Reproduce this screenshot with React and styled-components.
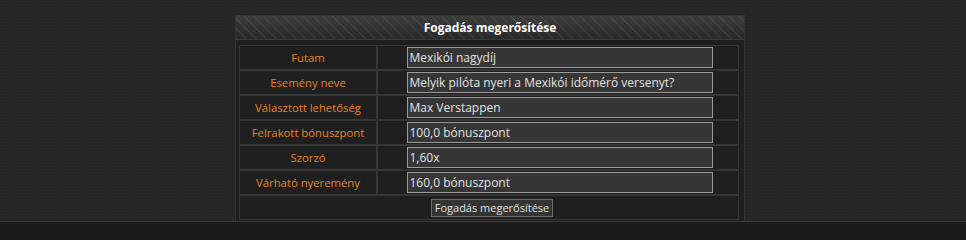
import React from "react";
import styled, { createGlobalStyle } from "styled-components";

const Global = createGlobalStyle`
  html, body { margin: 0; padding: 0; background: #1b1b1b; }
  body { font-family: "Open Sans", "Noto Sans", sans-serif; font-size: 12px; }
`;

const Page = styled.div`
  height: 222px;
  box-sizing: border-box;
  padding-top: 15px;
  background-color: #262626;
  background-image: radial-gradient(rgba(255,255,255,0.025) 1px, transparent 1px);
  background-size: 3px 3px;
  border-bottom: 1px solid #3a3a3a;
  display: flex;
  justify-content: center;
`;

const Footer = styled.div`
  height: 4px;
  background: #1c1c1c;
`;

const Panel = styled.div`
  width: 510px;
  margin-left: 14px;
  box-sizing: border-box;
  background: #1f1f1f;
  border: 1px solid #353535;
  border-bottom: none;
  display: flex;
  flex-direction: column;
`;

const Header = styled.div`
  height: 23px;
  display: flex;
  align-items: center;
  justify-content: center;
  color: #fff;
  font-weight: 700;
  font-size: 12px;
  border-bottom: 1px solid #3a3a3a;
  background-color: #2e2e2e;
  background-image:
    repeating-linear-gradient(45deg, rgba(255,255,255,0.07) 0 1px, transparent 1px 7px),
    linear-gradient(#3c3c3c, #282828);
`;

const Table = styled.div`
  margin: 5px 5px 0 3px;
  display: grid;
  grid-template-columns: 136px 1fr;
  grid-auto-rows: 23px;
  gap: 2px;
  padding: 1px;
  background: #363636;
`;

const Label = styled.div`
  background: #1f1f1f;
  color: #e5841f;
  font-size: 11.3px;
  display: flex;
  align-items: center;
  justify-content: center;
`;

const ValueCell = styled.div`
  background: #1f1f1f;
  display: flex;
  align-items: center;
  justify-content: center;
  padding-left: 3px;
`;

const Field = styled.div`
  width: 306px;
  height: 21px;
  box-sizing: border-box;
  background: #363636;
  border: 1px solid #9a9a9a;
  color: #e2e2e2;
  display: flex;
  align-items: center;
  padding-left: 2px;
  white-space: nowrap;
`;

const ActionRow = styled.div`
  grid-column: 1 / -1;
  background: #1f1f1f;
  display: flex;
  align-items: center;
  justify-content: center;
  padding-left: 6px;
`;

const Button = styled.button`
  height: 18px;
  padding: 0 3px;
  background: #343434;
  border: 1px solid #6a6a6a;
  color: #e2e2e2;
  font-family: inherit;
  font-size: 11px;
  line-height: 14px;
  cursor: pointer;
`;

const rows = [
  ["Futam", "Mexikói nagydíj"],
  ["Esemény neve", "Melyik pilóta nyeri a Mexikói időmérő versenyt?"],
  ["Választott lehetőség", "Max Verstappen"],
  ["Felrakott bónuszpont", "100,0 bónuszpont"],
  ["Szorzó", "1,60x"],
  ["Várható nyeremény", "160,0 bónuszpont"],
];

export default function App() {
  return (
    <>
      <Global />
      <Page>
        <Panel>
          <Header>Fogadás megerősítése</Header>
          <Table>
            {rows.map(([l, v]) => (
              <React.Fragment key={l}>
                <Label>{l}</Label>
                <ValueCell>
                  <Field>{v}</Field>
                </ValueCell>
              </React.Fragment>
            ))}
            <ActionRow>
              <Button type="button">Fogadás megerősítése</Button>
            </ActionRow>
          </Table>
        </Panel>
      </Page>
      <Footer />
    </>
  );
}
